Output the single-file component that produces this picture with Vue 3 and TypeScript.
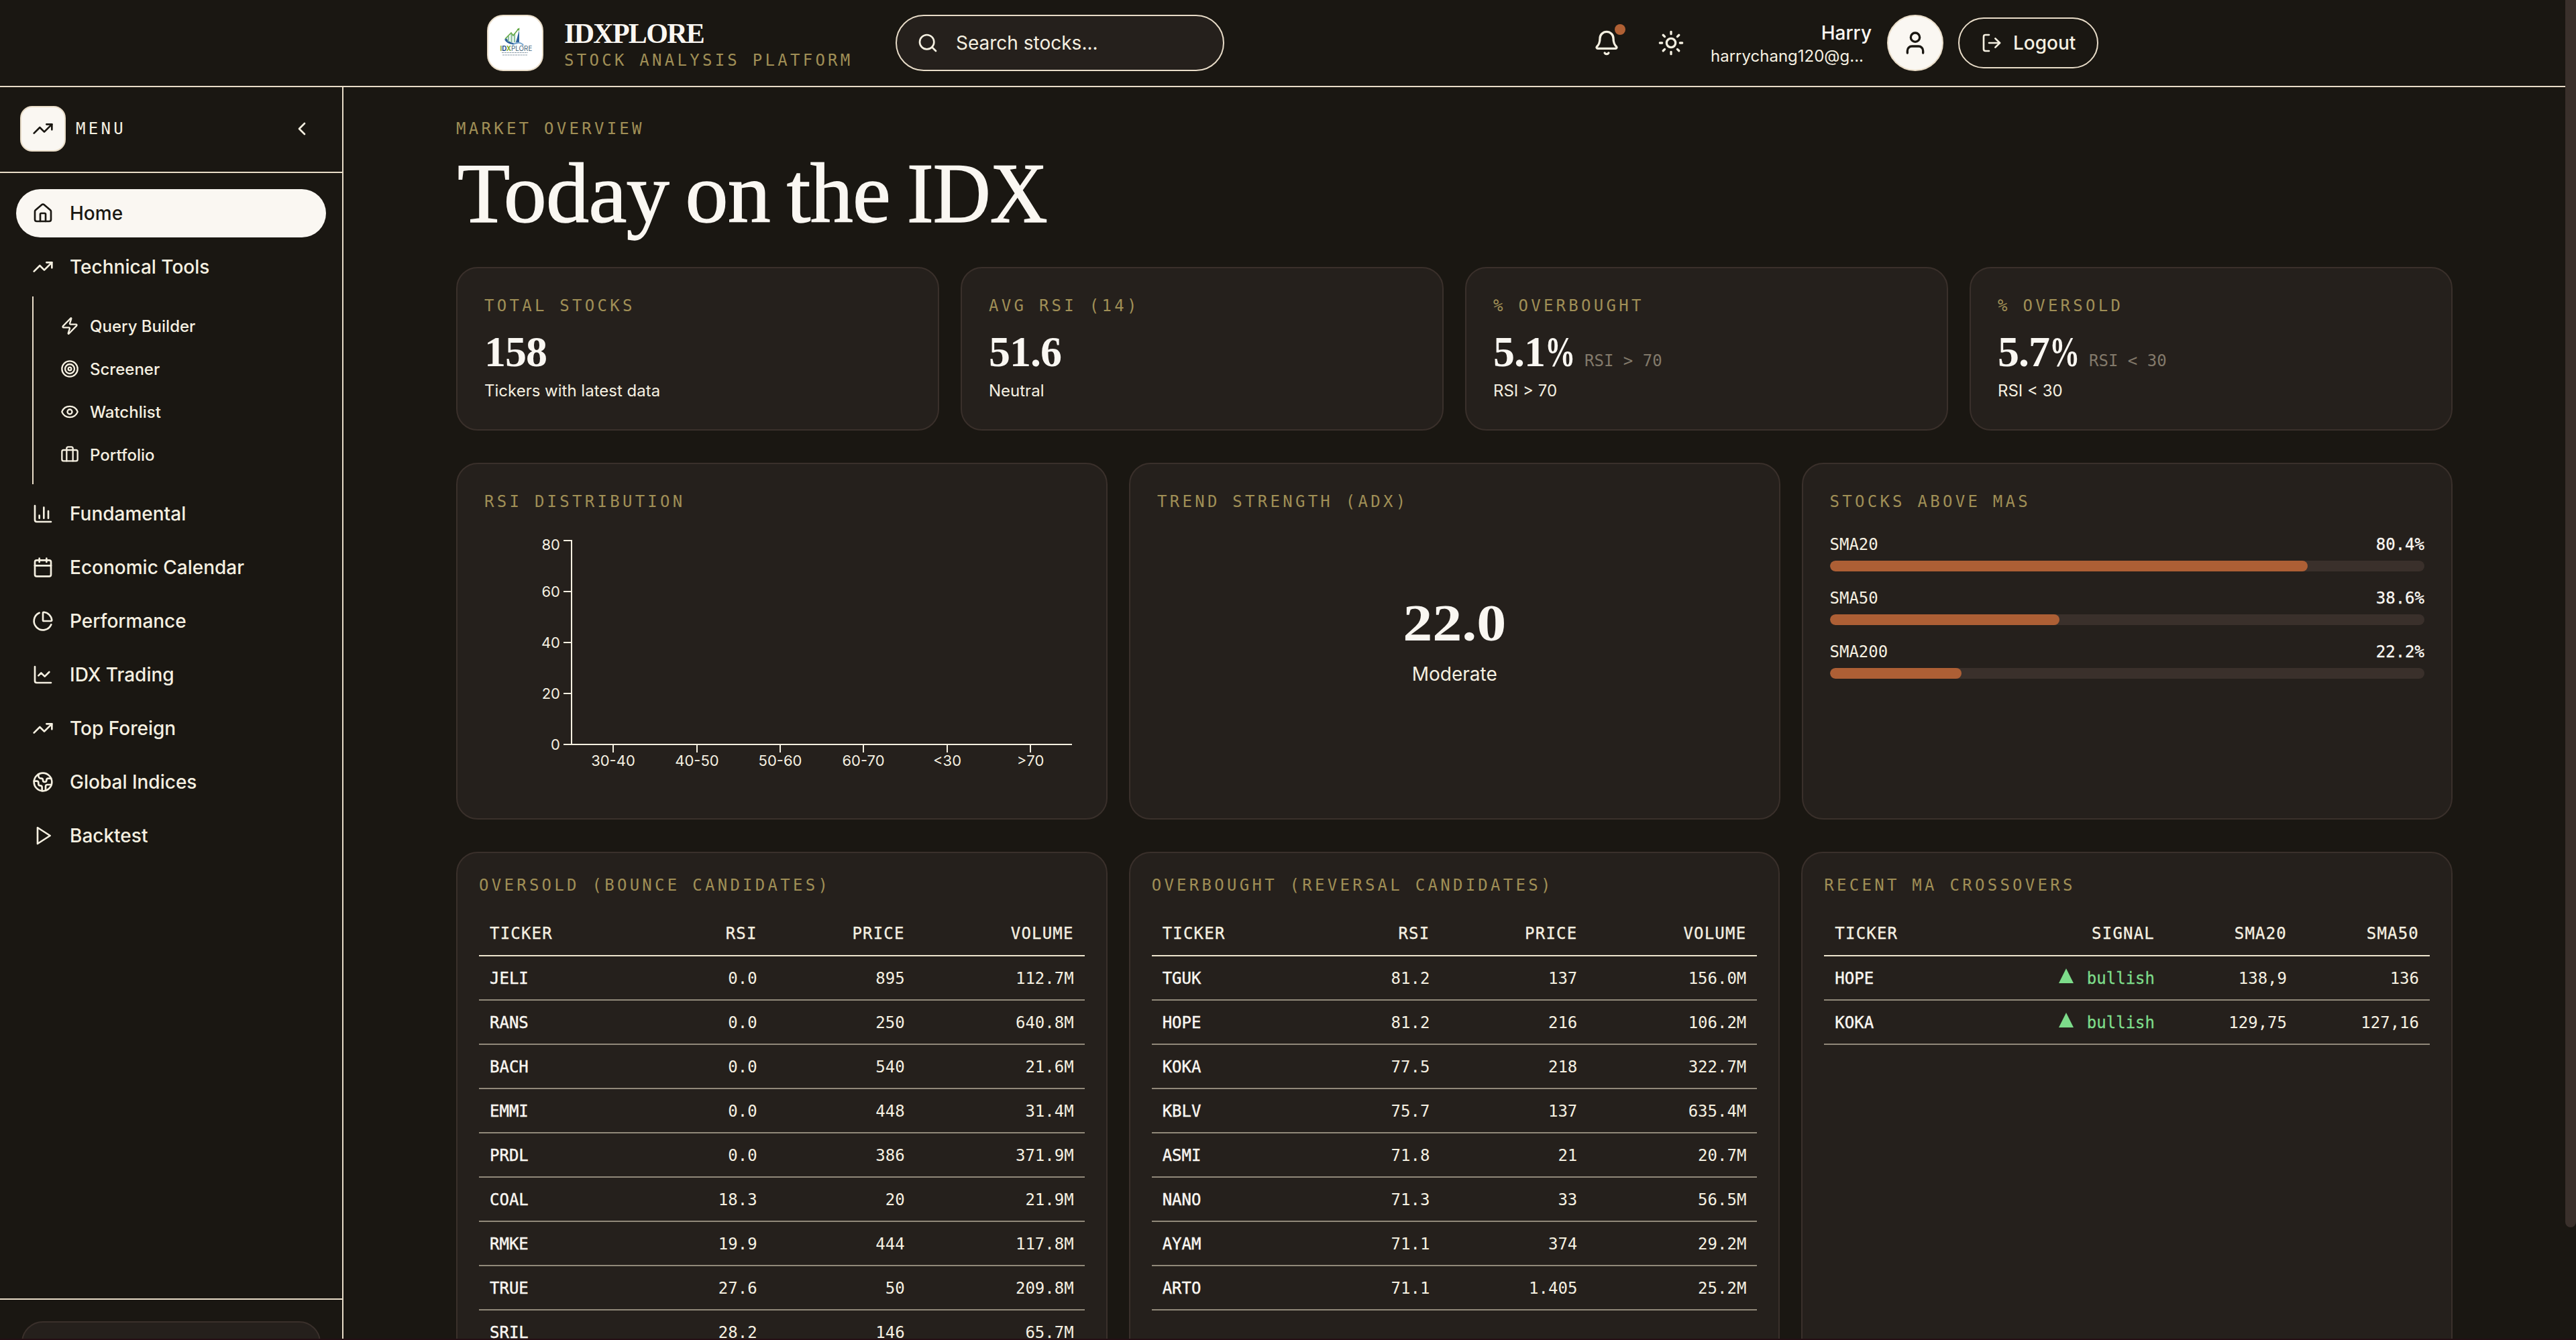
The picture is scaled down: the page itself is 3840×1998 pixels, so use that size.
<script setup lang="ts">
interface NavItem { label: string; icon: string }
interface Stat { label: string; value: string; percent?: boolean; hint?: string; sub: string }
interface TableData { title: string; columns: string[]; widths: number[]; rows: string[][] }

const icons: Record<string, string> = {
  home: '<path d="M15 21v-8a1 1 0 0 0-1-1h-4a1 1 0 0 0-1 1v8"/><path d="M3 10a2 2 0 0 1 .709-1.528l7-5.999a2 2 0 0 1 2.582 0l7 5.999A2 2 0 0 1 21 10v9a2 2 0 0 1-2 2H5a2 2 0 0 1-2-2z"/>',
  trend: '<path d="M16 7h6v6"/><path d="m22 7-8.5 8.5-5-5L2 17"/>',
  zap: '<path d="M4 14a1 1 0 0 1-.78-1.63l9.9-10.2a.5.5 0 0 1 .86.46l-1.92 6.02A1 1 0 0 0 13 10h7a1 1 0 0 1 .78 1.63l-9.9 10.2a.5.5 0 0 1-.86-.46l1.92-6.02A1 1 0 0 0 11 14z"/>',
  target: '<circle cx="12" cy="12" r="10"/><circle cx="12" cy="12" r="6"/><circle cx="12" cy="12" r="2"/>',
  eye: '<path d="M2.062 12.348a1 1 0 0 1 0-.696 10.75 10.75 0 0 1 19.876 0 1 1 0 0 1 0 .696 10.75 10.75 0 0 1-19.876 0"/><circle cx="12" cy="12" r="3"/>',
  briefcase: '<path d="M16 20V4a2 2 0 0 0-2-2h-4a2 2 0 0 0-2 2v16"/><rect width="20" height="14" x="2" y="6" rx="2"/>',
  columns: '<path d="M3 3v16a2 2 0 0 0 2 2h16"/><path d="M18 17V9"/><path d="M13 17V5"/><path d="M8 17v-3"/>',
  calendar: '<path d="M8 2v4"/><path d="M16 2v4"/><rect width="18" height="18" x="3" y="4" rx="2"/><path d="M3 10h18"/>',
  pie: '<path d="M21 12c.552 0 1.005-.449.95-.998a10 10 0 0 0-8.953-8.951c-.55-.055-.998.398-.998.95v8a1 1 0 0 0 1 1z"/><path d="M21.21 15.89A10 10 0 1 1 8 2.83"/>',
  line: '<path d="M3 3v16a2 2 0 0 0 2 2h16"/><path d="m19 9-5 5-4-4-3 3"/>',
  earth: '<path d="M21.54 15H17a2 2 0 0 0-2 2v4.54"/><path d="M7 3.34V5a3 3 0 0 0 3 3a2 2 0 0 1 2 2c0 1.1.9 2 2 2a2 2 0 0 0 2-2c0-1.1.9-2 2-2h3.17"/><path d="M11 21.95V18a2 2 0 0 0-2-2a2 2 0 0 1-2-2v-1a2 2 0 0 0-2-2H2.05"/><circle cx="12" cy="12" r="10"/>',
  play: '<polygon points="6 3 20 12 6 21 6 3"/>',
  search: '<circle cx="11" cy="11" r="8"/><path d="m21 21-4.3-4.3"/>',
  bell: '<path d="M10.268 21a2 2 0 0 0 3.464 0"/><path d="M3.262 15.326A1 1 0 0 0 4 17h16a1 1 0 0 0 .74-1.673C19.41 13.956 18 12.499 18 8A6 6 0 0 0 6 8c0 4.499-1.411 5.956-2.738 7.326"/>',
  sun: '<circle cx="12" cy="12" r="4"/><path d="M12 2v2"/><path d="M12 20v2"/><path d="m4.93 4.93 1.41 1.41"/><path d="m17.66 17.66 1.41 1.41"/><path d="M2 12h2"/><path d="M20 12h2"/><path d="m6.34 17.66-1.41 1.41"/><path d="m19.07 4.93-1.41 1.41"/>',
  user: '<path d="M19 21v-2a4 4 0 0 0-4-4H9a4 4 0 0 0-4 4v2"/><circle cx="12" cy="7" r="4"/>',
  logout: '<path d="m16 17 5-5-5-5"/><path d="M21 12H9"/><path d="M9 21H5a2 2 0 0 1-2-2V5a2 2 0 0 1 2-2h4"/>',
  chevron: '<path d="m15 18-6-6 6-6"/>',
}

const tools: NavItem[] = [
  { label: 'Query Builder', icon: 'zap' },
  { label: 'Screener', icon: 'target' },
  { label: 'Watchlist', icon: 'eye' },
  { label: 'Portfolio', icon: 'briefcase' },
]

const nav: NavItem[] = [
  { label: 'Fundamental', icon: 'columns' },
  { label: 'Economic Calendar', icon: 'calendar' },
  { label: 'Performance', icon: 'pie' },
  { label: 'IDX Trading', icon: 'line' },
  { label: 'Top Foreign', icon: 'trend' },
  { label: 'Global Indices', icon: 'earth' },
  { label: 'Backtest', icon: 'play' },
]

const stats: Stat[] = [
  { label: 'TOTAL STOCKS', value: '158', sub: 'Tickers with latest data' },
  { label: 'AVG RSI (14)', value: '51.6', sub: 'Neutral' },
  { label: '% OVERBOUGHT', value: '5.1', percent: true, hint: 'RSI > 70', sub: 'RSI > 70' },
  { label: '% OVERSOLD', value: '5.7', percent: true, hint: 'RSI < 30', sub: 'RSI < 30' },
]

const averages = [
  { label: 'SMA20', value: 80.4 },
  { label: 'SMA50', value: 38.6 },
  { label: 'SMA200', value: 22.2 },
]

const yTicks = [80, 60, 40, 20, 0].map((value, i) => ({ value, y: 1 + i * 76 }))
const xTicks = ['30-40', '40-50', '50-60', '60-70', '<30', '>70'].map((label, i) => ({
  label,
  x: Math.round(130 + 62.2 + i * 124.4),
}))

const tables: TableData[] = [
  {
    title: 'OVERSOLD (BOUNCE CANDIDATES)',
    columns: ['TICKER', 'RSI', 'PRICE', 'VOLUME'],
    widths: [0, 200, 220, 252],
    rows: [
      ['JELI', '0.0', '895', '112.7M'],
      ['RANS', '0.0', '250', '640.8M'],
      ['BACH', '0.0', '540', '21.6M'],
      ['EMMI', '0.0', '448', '31.4M'],
      ['PRDL', '0.0', '386', '371.9M'],
      ['COAL', '18.3', '20', '21.9M'],
      ['RMKE', '19.9', '444', '117.8M'],
      ['TRUE', '27.6', '50', '209.8M'],
      ['SRIL', '28.2', '146', '65.7M'],
    ],
  },
  {
    title: 'OVERBOUGHT (REVERSAL CANDIDATES)',
    columns: ['TICKER', 'RSI', 'PRICE', 'VOLUME'],
    widths: [0, 200, 220, 252],
    rows: [
      ['TGUK', '81.2', '137', '156.0M'],
      ['HOPE', '81.2', '216', '106.2M'],
      ['KOKA', '77.5', '218', '322.7M'],
      ['KBLV', '75.7', '137', '635.4M'],
      ['ASMI', '71.8', '21', '20.7M'],
      ['NANO', '71.3', '33', '56.5M'],
      ['AYAM', '71.1', '374', '29.2M'],
      ['ARTO', '71.1', '1.405', '25.2M'],
    ],
  },
  {
    title: 'RECENT MA CROSSOVERS',
    columns: ['TICKER', 'SIGNAL', 'SMA20', 'SMA50'],
    widths: [0, 240, 197, 197],
    rows: [
      ['HOPE', 'bullish', '138,9', '136'],
      ['KOKA', 'bullish', '129,75', '127,16'],
    ],
  },
]
</script>

<template>
  <div class="page">
    <header class="topbar">
      <div class="brand-logo">
        <svg viewBox="0 0 80 80" width="80" height="80">
          <path d="M24 35 q4 7 13 7 l8 -1 q-14 0 -18 -8z" fill="#2b5f9a" />
          <path d="M30 38v-8M34.500 39v-12M39 39v-13" stroke="#8cc0a0" stroke-width="2.400" />
          <path d="M41 39 L46 21 L46 40z" fill="#2b5f9a" />
          <path d="M25 34 L34 25 L37 29 L45 19" fill="none" stroke="#62a744" stroke-width="1.600" />
          <path d="M42.500 19.500l4-2-.5 4.500z" fill="#62a744" />
          <path d="M36 43 q8 -6 15 -1 l1 2" fill="none" stroke="#7da9cf" stroke-width="2" />
          <text x="17.500" y="51.500" font-size="9.800" font-family="Inter, sans-serif" fill="#3f6277"><tspan font-weight="700" fill="#7aa52f">I</tspan><tspan font-weight="700" fill="#234f86">D</tspan><tspan font-weight="700" fill="#7aa52f">X</tspan>PLORE</text>
          <path d="M20 54.500h39M21 58h37" stroke="#5c7283" stroke-width="1.200" stroke-dasharray="3 0.8" opacity=".7" />
        </svg>
      </div>
      <div class="brand-text">
        <div class="brand-name">IDXPLORE</div>
        <div class="eyebrow brand-tag">STOCK ANALYSIS PLATFORM</div>
      </div>
      <div class="search">
        <svg class="icon" width="32" height="32" viewBox="0 0 24 24" v-html="icons.search" />
        <span>Search stocks...</span>
      </div>
      <div class="actions">
        <div class="bell">
          <svg class="icon" width="40" height="40" viewBox="0 0 24 24" v-html="icons.bell" />
          <i class="dot" />
        </div>
        <svg class="icon sun" width="40" height="40" viewBox="0 0 24 24" v-html="icons.sun" />
        <div class="account">
          <div class="account-name">Harry</div>
          <div class="account-mail">harrychang120@g...</div>
        </div>
        <div class="avatar">
          <svg class="icon" width="40" height="40" viewBox="0 0 24 24" v-html="icons.user" />
        </div>
        <div class="logout">
          <svg class="icon" width="32" height="32" viewBox="0 0 24 24" v-html="icons.logout" />
          <span>Logout</span>
        </div>
      </div>
    </header>

    <div class="body">
      <aside class="sidebar">
        <div class="menu-head">
          <div class="menu-logo">
            <svg class="icon" width="32" height="32" viewBox="0 0 24 24" v-html="icons.trend" />
          </div>
          <span class="menu-title">MENU</span>
          <svg class="icon menu-toggle" width="32" height="32" viewBox="0 0 24 24" v-html="icons.chevron" />
        </div>
        <nav class="nav">
          <div class="nav-item active">
            <svg class="icon" width="32" height="32" viewBox="0 0 24 24" v-html="icons.home" />
            <span>Home</span>
          </div>
          <div class="nav-item">
            <svg class="icon" width="32" height="32" viewBox="0 0 24 24" v-html="icons.trend" />
            <span>Technical Tools</span>
          </div>
          <div class="subnav">
            <div v-for="item in tools" :key="item.label" class="sub-item">
              <svg class="icon" width="28" height="28" viewBox="0 0 24 24" v-html="icons[item.icon]" />
              <span>{{ item.label }}</span>
            </div>
          </div>
          <div v-for="item in nav" :key="item.label" class="nav-item">
            <svg class="icon" width="32" height="32" viewBox="0 0 24 24" v-html="icons[item.icon]" />
            <span>{{ item.label }}</span>
          </div>
        </nav>
        <div class="side-foot"><div class="foot-card" /></div>
      </aside>

      <main class="main">
        <div class="eyebrow">MARKET OVERVIEW</div>
        <h1>Today on the <span class="tight">IDX</span></h1>

        <section class="stats">
          <div v-for="s in stats" :key="s.label" class="card stat">
            <div class="eyebrow">{{ s.label }}</div>
            <div class="stat-value">
              <span>{{ s.value }}<span v-if="s.percent" class="percent">%</span></span>
              <span v-if="s.hint" class="hint">{{ s.hint }}</span>
            </div>
            <div class="stat-sub">{{ s.sub }}</div>
          </div>
        </section>

        <section class="grid panels">
          <div class="card panel">
            <div class="eyebrow">RSI DISTRIBUTION</div>
            <svg class="chart" width="887" height="380" viewBox="0 0 887 380">
              <path class="axis" d="M130 0V306M129 305H876" />
              <g v-for="t in yTicks" :key="t.value">
                <path class="axis" :d="`M118 ${t.y}h12`" />
                <text x="113" :y="(t.value === 80 ? 7 : t.y) + 8" text-anchor="end">{{ t.value }}</text>
              </g>
              <g v-for="t in xTicks" :key="t.label">
                <path class="axis" :d="`M${t.x} 305v12`" />
                <text :x="t.x" y="337" text-anchor="middle">{{ t.label }}</text>
              </g>
            </svg>
          </div>
          <div class="card panel">
            <div class="eyebrow">TREND STRENGTH (ADX)</div>
            <div class="adx">
              <div class="adx-value">22.0</div>
              <div class="adx-label">Moderate</div>
            </div>
          </div>
          <div class="card panel">
            <div class="eyebrow">STOCKS ABOVE MAS</div>
            <div class="averages">
              <div v-for="a in averages" :key="a.label" class="average">
                <div class="average-row">
                  <span>{{ a.label }}</span><b>{{ a.value.toFixed(1) }}%</b>
                </div>
                <div class="track"><div class="fill" :style="{ width: a.value + '%' }" /></div>
              </div>
            </div>
          </div>
        </section>

        <section class="grid tables">
          <div v-for="t in tables" :key="t.title" class="card table-card">
            <div class="eyebrow">{{ t.title }}</div>
            <table>
              <colgroup>
                <col v-for="(w, i) in t.widths" :key="i" :style="w ? { width: w + 'px' } : {}" />
              </colgroup>
              <thead>
                <tr><th v-for="c in t.columns" :key="c">{{ c }}</th></tr>
              </thead>
              <tbody>
                <tr v-for="row in t.rows" :key="row[0]">
                  <td v-for="(cell, i) in row" :key="i" :class="{ bullish: cell === 'bullish' }">
                    <svg v-if="cell === 'bullish'" class="up" width="22" height="22" viewBox="0 0 22 22"><path d="M11 0 22 22H0z" /></svg>{{ cell }}
                  </td>
                </tr>
              </tbody>
            </table>
          </div>
        </section>
      </main>
    </div>
    <div class="scroll-thumb" />
    <div class="bottom-edge" />
  </div>
</template>

<style>
body {
  margin: 0;
  background: #1a1712;
  overflow: hidden;
}
</style>

<style scoped>
* {
  box-sizing: border-box;
}
.page {
  position: relative;
  width: 3840px;
  height: 1998px;
  overflow: hidden;
  background: #1a1712;
  color: #f5f0e1;
  font-family: Inter, sans-serif;
  font-size: 28px;
  white-space: nowrap;
}
.icon {
  display: block;
  flex: none;
  fill: none;
  stroke: currentColor;
  stroke-width: 2;
  stroke-linecap: round;
  stroke-linejoin: round;
}
.eyebrow {
  height: 32px;
  padding-top: 1px;
  font-family: "DejaVu Sans Mono", monospace;
  font-size: 24px;
  line-height: 32px;
  letter-spacing: 4.27px;
  color: #a08f56;
}

.topbar {
  display: flex;
  align-items: center;
  width: 3824px;
  height: 130px;
  padding: 0 696px 0 726px;
  border-bottom: 2px solid #e8dcc8;
}
.brand-logo {
  flex: none;
  width: 84px;
  height: 84px;
  border: 2px solid #e8dcc8;
  border-radius: 24px;
  background: #fff;
  overflow: hidden;
}
.brand-logo svg {
  display: block;
}
.brand-text {
  width: 494px;
  margin-left: 31px;
  padding-top: 4px;
}
.brand-name {
  font-family: "Liberation Serif", serif;
  font-weight: 700;
  font-size: 42px;
  line-height: 46px;
  letter-spacing: -1.7px;
  color: #faf7f2;
}
.search {
  display: flex;
  align-items: center;
  gap: 26px;
  width: 490px;
  height: 84px;
  padding-left: 30px;
  border: 2px solid #e8dcc8;
  border-radius: 42px;
  background: #25201c;
}
.actions {
  display: flex;
  align-items: center;
  margin-left: auto;
}
.bell {
  position: relative;
}
.dot {
  position: absolute;
  left: 32px;
  top: -8px;
  width: 16px;
  height: 16px;
  border-radius: 50%;
  background: #b06034;
}
.sun {
  margin-left: 56px;
}
.account {
  width: 240px;
  margin-left: 39px;
  padding-top: 3px;
}
.account-name {
  font-weight: 500;
  line-height: 36px;
  text-align: right;
  color: #faf7f2;
}
.account-mail {
  font-size: 24px;
  line-height: 34px;
}
.avatar {
  display: grid;
  place-items: center;
  width: 84px;
  height: 84px;
  margin-left: 23px;
  border: 2px solid #e8dcc8;
  border-radius: 50%;
  background: #faf7f2;
  color: #1a1712;
}
.logout {
  display: flex;
  align-items: center;
  gap: 16px;
  width: 209px;
  height: 76px;
  margin-left: 22px;
  padding-left: 32px;
  border: 2px solid #e8dcc8;
  border-radius: 38px;
  font-weight: 500;
}

.body {
  display: flex;
  width: 3824px;
  height: 1868px;
}
.sidebar {
  display: flex;
  flex-direction: column;
  flex: none;
  width: 512px;
  border-right: 2px solid #e8dcc8;
}
.menu-head {
  display: flex;
  align-items: center;
  height: 128px;
  padding: 0 44px 2px 30px;
  border-bottom: 2px solid #e8dcc8;
}
.menu-logo {
  display: grid;
  place-items: center;
  width: 68px;
  height: 68px;
  border: 2px solid #e8dcc8;
  border-radius: 18px;
  background: #faf7f2;
  color: #1a1712;
}
.menu-title {
  margin-left: 15px;
  font-family: "DejaVu Sans Mono", monospace;
  font-size: 24px;
  letter-spacing: 4.27px;
}
.menu-toggle {
  margin-left: auto;
}
.nav {
  flex: 1;
  padding: 24px;
}
.nav-item {
  display: flex;
  align-items: center;
  gap: 24px;
  height: 72px;
  margin-bottom: 8px;
  padding-left: 24px;
  border-radius: 36px;
  font-weight: 500;
}
.nav-item.active {
  background: #faf7f2;
  color: #1a1712;
}
.subnav {
  height: 280px;
  margin: 0 0 8px 24px;
  padding: 16px 0 0 40px;
  border-left: 2px solid #e8dcc8;
}
.sub-item {
  display: flex;
  align-items: center;
  gap: 16px;
  height: 56px;
  margin-bottom: 8px;
  font-size: 24px;
  font-weight: 500;
}
.side-foot {
  height: 62px;
  padding: 32px 32px 0;
  border-top: 2px solid #e8dcc8;
  overflow: hidden;
}
.foot-card {
  height: 100px;
  border: 2px solid #3a302b;
  border-radius: 32px;
  background: #25201c;
}

.main {
  flex: 1;
  min-width: 0;
  padding: 45px 168px 0;
  overflow: hidden;
}
h1 {
  margin: 21px 0 50px 2px;
  font-family: "Liberation Serif", serif;
  font-weight: 400;
  font-size: 128px;
  line-height: 120px;
  letter-spacing: -0.6px;
  word-spacing: -7px;
  color: #faf7f2;
  -webkit-text-stroke: 1.4px #faf7f2;
}
.tight {
  display: inline-block;
  letter-spacing: -1px;
  transform: scaleX(0.93);
  transform-origin: left;
}
.card {
  border: 2px solid #3a302b;
  border-radius: 32px;
  background: #25201c;
}
.stats {
  display: grid;
  grid-template-columns: repeat(4, 1fr);
  gap: 32px;
}
.stat {
  height: 244px;
  padding: 39px 40px 0;
}
.stat-value {
  display: flex;
  align-items: baseline;
  gap: 14px;
  height: 60px;
  margin: 24px 0 12px;
  font-family: "Liberation Serif", serif;
  font-weight: 700;
  font-size: 64px;
  line-height: 60px;
  letter-spacing: -1px;
  color: #faf7f2;
}
.percent {
  display: inline-block;
  width: 45px;
  transform: scaleX(0.71);
  transform-origin: left;
}
.hint {
  font-family: "DejaVu Sans Mono", monospace;
  font-weight: 400;
  font-size: 24px;
  letter-spacing: 0;
  color: #82796a;
}
.stat-sub {
  font-size: 24px;
  line-height: 32px;
}
.grid {
  display: grid;
  grid-template-columns: repeat(3, 1fr);
  gap: 32px;
  margin-top: 48px;
}
.panel {
  height: 532px;
  padding: 39px 40px 0;
}
.chart {
  display: block;
  margin-top: 42px;
  overflow: visible;
}
.chart text {
  fill: #f5f0e1;
  font-size: 22px;
}
.axis {
  fill: none;
  stroke: #f5f0e1;
  stroke-width: 2;
}
.adx {
  display: flex;
  flex-direction: column;
  align-items: center;
  padding-top: 126px;
}
.adx-value {
  font-family: "Liberation Serif", serif;
  font-weight: 700;
  font-size: 78px;
  line-height: 80px;
  transform: scaleX(1.13);
  color: #faf7f2;
}
.adx-label {
  margin-top: 18px;
  line-height: 36px;
}
.averages {
  display: flex;
  flex-direction: column;
  gap: 23px;
  margin-top: 32px;
  font-family: "DejaVu Sans Mono", monospace;
  font-size: 24px;
}
.average-row {
  display: flex;
  justify-content: space-between;
  height: 32px;
  margin-bottom: 9px;
  padding-top: 1px;
  line-height: 32px;
}
.average-row b {
  font-weight: 400;
  color: #faf7f2;
  -webkit-text-stroke: 0.3px #faf7f2;
}
.track {
  height: 16px;
  border-radius: 8px;
  background: #3a302b;
  overflow: hidden;
}
.fill {
  height: 16px;
  border-radius: 8px;
  background: #ad5f35;
}

.table-card {
  height: 900px;
  padding: 31px 32px 0;
}
table {
  width: 100%;
  margin-top: 23px;
  border-collapse: separate;
  border-spacing: 0;
  table-layout: fixed;
  font-family: "DejaVu Sans Mono", monospace;
  font-size: 24px;
}
th,
td {
  height: 66px;
  padding: 2px 16px 0;
  border-bottom: 2px solid #91897a;
  line-height: 32px;
  text-align: right;
  vertical-align: middle;
}
th {
  height: 68px;
  border-bottom-color: #efe6cf;
  font-weight: 400;
  letter-spacing: 1.2px;
  -webkit-text-stroke: 0.3px #f5f0e1;
}
th:first-child,
td:first-child {
  text-align: left;
}
td:first-child {
  color: #faf7f2;
  -webkit-text-stroke: 0.4px #faf7f2;
}
.bullish {
  color: #7ddc8a;
  -webkit-text-stroke: 0.3px #7ddc8a;
}
.up {
  margin-right: 20px;
  vertical-align: 1px;
  fill: #7ddc8a;
}
.scroll-thumb {
  position: absolute;
  top: -10px;
  right: 0;
  width: 16px;
  height: 1840px;
  border-radius: 8px;
  background: #3a302b;
}
.bottom-edge {
  position: absolute;
  left: 0;
  right: 0;
  bottom: 0;
  height: 2px;
  background: #240f14;
}
</style>
